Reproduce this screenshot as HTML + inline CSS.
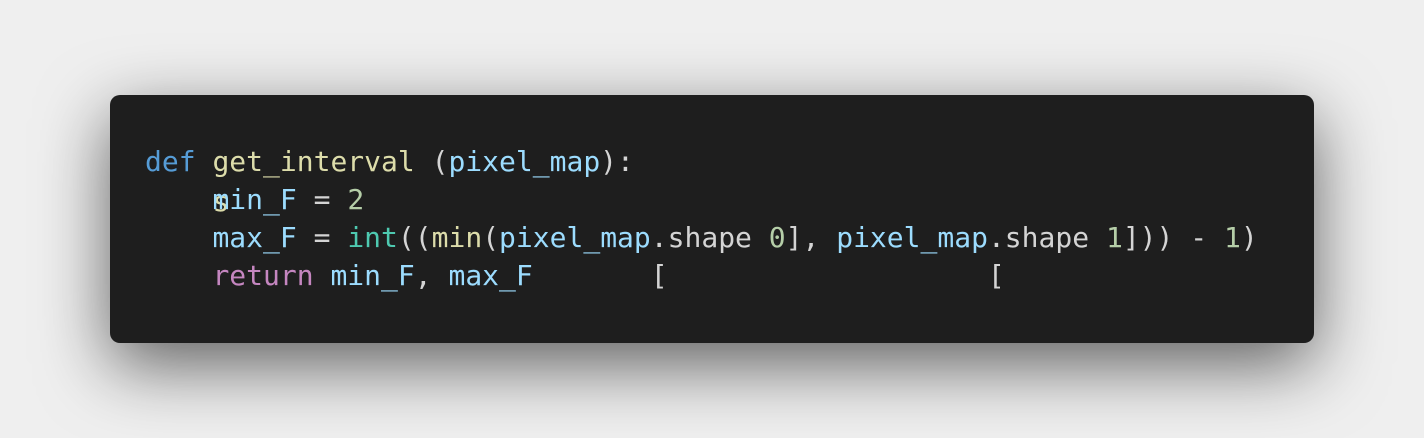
<!DOCTYPE html>
<html><head><meta charset="utf-8"><style>
html,body{margin:0;padding:0;width:1424px;height:438px;background:#efefef;overflow:hidden}
.box{position:absolute;left:110px;top:95px;width:1204px;height:248px;background:#1e1e1e;border-radius:10px;box-shadow:0 22px 70px rgba(0,0,0,0.6)}
pre{position:absolute;left:35px;top:48px;margin:0;font-family:"DejaVu Sans Mono","Liberation Mono",monospace;font-size:28px;line-height:38px;color:#d4d4d4}
.k{color:#569cd6}.f{color:#dcdcaa}.v{color:#9cdcfe}.n{color:#b5cea8}.t{color:#4ec9b0}.r{color:#c586c0}
.ov{position:relative}
.ov .s{position:absolute;left:0;top:0;color:#dcdcaa}
.ov .m{position:relative}
</style></head><body>
<div class="box"><pre><span class="k">def</span> <span class="f">get_interval</span> (<span class="v">pixel_map</span>):
    <span class="ov"><span class="s">s</span><span class="m v">m</span></span><span class="v">in_F</span> = <span class="n">2</span>
    <span class="v">max_F</span> = <span class="t">int</span>((<span class="f">min</span>(<span class="v">pixel_map</span>.shape <span class="n">0</span>], <span class="v">pixel_map</span>.shape <span class="n">1</span>])) - <span class="n">1</span>)
    <span class="r">return</span> <span class="v">min_F</span>, <span class="v">max_F</span>       [                   [</pre></div>
</body></html>
